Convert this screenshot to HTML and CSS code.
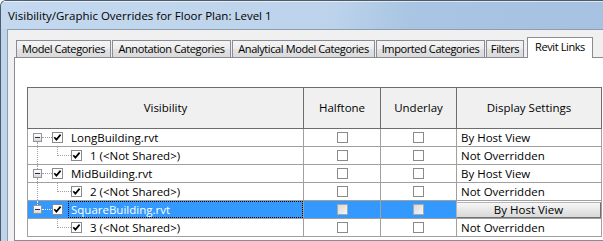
FILE: index.html
```html
<!DOCTYPE html>
<html>
<head>
<meta charset="utf-8">
<link rel="stylesheet" href="styles.css">
</head>
<body>
<div class="window">
  <div class="titlebar"><span class="title">Visibility/Graphic Overrides for Floor Plan: Level 1</span></div>
  <div class="main">
    <div class="client">
      <div class="tabs">
        <div class="tab t-model">Model Categories</div>
        <div class="tab t-anno">Annotation Categories</div>
        <div class="tab t-anal">Analytical Model Categories</div>
        <div class="tab t-imp">Imported Categories</div>
        <div class="tab t-filt">Filters</div>
        <div class="tab active t-links">Revit Links</div>
      </div>
      <div class="panel">
        <div class="grid">
          <div class="grid-head">
            <div class="hcell">Visibility</div>
            <div class="hcell">Halftone</div>
            <div class="hcell">Underlay</div>
            <div class="hcell">Display Settings</div>
          </div>
          <div class="grid-body">
            <div class="row">
              <div class="cell tree down"><span class="expander"><span class="minus"></span></span><span class="hline"></span><span class="check"><svg class="tick" viewBox="0 0 9 9"><polyline points="1.3,4.2 3.4,6.6 7.6,1.6"/></svg></span><span class="label">LongBuilding.rvt</span></div>
              <div class="cell center"><span class="check"></span></div>
              <div class="cell center"><span class="check"></span></div>
              <div class="cell disp">By Host View</div>
            </div>
            <div class="row">
              <div class="cell tree child trunk"><span class="elbow"></span><span class="check"><svg class="tick" viewBox="0 0 9 9"><polyline points="1.3,4.2 3.4,6.6 7.6,1.6"/></svg></span><span class="label">1 (&lt;Not Shared&gt;)</span></div>
              <div class="cell center"><span class="check"></span></div>
              <div class="cell center"><span class="check"></span></div>
              <div class="cell disp">Not Overridden</div>
            </div>
            <div class="row">
              <div class="cell tree up down"><span class="expander"><span class="minus"></span></span><span class="hline"></span><span class="check"><svg class="tick" viewBox="0 0 9 9"><polyline points="1.3,4.2 3.4,6.6 7.6,1.6"/></svg></span><span class="label">MidBuilding.rvt</span></div>
              <div class="cell center"><span class="check"></span></div>
              <div class="cell center"><span class="check"></span></div>
              <div class="cell disp">By Host View</div>
            </div>
            <div class="row">
              <div class="cell tree child trunk"><span class="elbow"></span><span class="check"><svg class="tick" viewBox="0 0 9 9"><polyline points="1.3,4.2 3.4,6.6 7.6,1.6"/></svg></span><span class="label">2 (&lt;Not Shared&gt;)</span></div>
              <div class="cell center"><span class="check"></span></div>
              <div class="cell center"><span class="check"></span></div>
              <div class="cell disp">Not Overridden</div>
            </div>
            <div class="row selected">
              <div class="cell tree up"><span class="expander"><span class="minus"></span></span><span class="hline"></span><span class="check"><svg class="tick" viewBox="0 0 9 9"><polyline points="1.3,4.2 3.4,6.6 7.6,1.6"/></svg></span><span class="label focus">SquareBuilding.rvt</span></div>
              <div class="cell center"><span class="check disabled"></span></div>
              <div class="cell center"><span class="check disabled"></span></div>
              <div class="cell btn-cell"><span class="btn">By Host View</span></div>
            </div>
            <div class="row">
              <div class="cell tree child"><span class="elbow"></span><span class="check"><svg class="tick" viewBox="0 0 9 9"><polyline points="1.3,4.2 3.4,6.6 7.6,1.6"/></svg></span><span class="label">3 (&lt;Not Shared&gt;)</span></div>
              <div class="cell center"><span class="check"></span></div>
              <div class="cell center"><span class="check"></span></div>
              <div class="cell disp">Not Overridden</div>
            </div>
          </div>
        </div>
      </div>
    </div>
  </div>
</div>
</body>
</html>
```

FILE: styles.css
```css
* { box-sizing: border-box; }

html, body {
  margin: 0;
  padding: 0;
}

body {
  width: 603px;
  height: 241px;
  overflow: hidden;
  background: #ffffff;
  font-family: "Open Sans", "Noto Sans", sans-serif;
  font-size: 11.5px;
  color: #000;
}

.window {
  width: 603px;
  height: 241px;
  display: flex;
  flex-direction: column;
  background: #bed4eb;
  border-top: 1px solid #4d5b6b;
  border-left: 1px solid #4d5b6b;
  border-top-left-radius: 6px;
  overflow: hidden;
}

.titlebar {
  height: 28px;
  flex: none;
  display: flex;
  align-items: center;
  padding-left: 7px;
  padding-top: 1px;
  background: linear-gradient(100deg, #c4d9ef 0%, #bcd3eb 55%, #a9c5e3 68%, #a6c2e0 100%);
  box-shadow: inset 0 1px 0 rgba(255,255,255,0.6);
}

.title {
  font-size: 11.5px;
  color: #000;
  white-space: nowrap;
}

.main {
  flex: 1;
  display: flex;
  padding-left: 6px;
  min-height: 0;
}

.client {
  flex: 1;
  display: flex;
  flex-direction: column;
  background: #f0f0f0;
  border-left: 1px solid #8d9db0;
  border-top: 1px solid #8d9db0;
  padding: 7px 0 0 6px;
  min-height: 0;
  min-width: 0;
}

/* Tabs */
.tabs {
  display: flex;
  align-items: flex-start;
  height: 21px;
  margin-left: 2px;
  margin-bottom: -1px;
  position: relative;
  z-index: 1;
  flex: none;
}

.tab {
  height: 17px;
  margin-top: 3px;
  margin-left: 1px;
  border: 1px solid #898c95;
  border-bottom: none;
  background: linear-gradient(#f4f4f4 0%, #ececec 50%, #e2e2e2 51%, #dadada 100%);
  font-size: 11px;
  letter-spacing: -0.4px;
  line-height: 15px;
  text-align: center;
  white-space: nowrap;
  color: #000;
  flex: none;
}

.tab.active {
  height: 21px;
  margin-top: 0;
  background: #ffffff;
  line-height: 18px;
}

.t-model { width: 95px; margin-left: 0; }
.t-anno { width: 119px; }
.t-anal { width: 143px; }
.t-imp { width: 109px; }
.t-filt { width: 38px; }
.t-links { width: 66px; margin-left: 3px; }

/* Panel */
.panel {
  flex: 1;
  background: #ffffff;
  border: 1px solid #898c95;
  border-right: none;
  padding: 29px 0 0 12px;
}

.grid {
  width: 575px;
}

.grid-head {
  display: grid;
  grid-template-columns: 275px 76px 75px 144px;
  gap: 1px;
  background: #6d6d6d;
  border: 1px solid #6d6d6d;
}

.hcell {
  height: 40px;
  background: #f0f0f0;
  display: flex;
  align-items: center;
  justify-content: center;
  padding-bottom: 1px;
}

.grid-body {
  display: grid;
  grid-template-columns: 275px 76px 75px 144px;
  grid-auto-rows: 17px;
  gap: 1px;
  background: #a0a0a0;
  border: 1px solid #a0a0a0;
  border-top: none;
}

.row { display: contents; }

.cell {
  background: #ffffff;
  display: flex;
  align-items: center;
  white-space: nowrap;
}

.center { justify-content: center; }

.disp { padding-left: 4px; }

/* Tree */
.tree {
  position: relative;
  padding-left: 5px;
}

.tree.child { padding-left: 29px; }

.tree.up::before {
  content: "";
  position: absolute;
  left: 9px;
  top: 0;
  height: 4px;
  border-left: 1px dotted #a0a0a0;
}

.tree.down::after {
  content: "";
  position: absolute;
  left: 9px;
  top: 13px;
  bottom: 0;
  border-left: 1px dotted #a0a0a0;
}

.tree.trunk::before {
  content: "";
  position: absolute;
  left: 9px;
  top: 0;
  bottom: 0;
  border-left: 1px dotted #a0a0a0;
}

.expander {
  width: 9px;
  height: 9px;
  flex: none;
  border: 1px solid #949494;
  background: linear-gradient(#ffffff, #d8d8d8);
  display: flex;
  align-items: center;
  justify-content: center;
}

.minus {
  width: 5px;
  height: 1px;
  background: #1f2f52;
}

.hline {
  width: 10px;
  height: 1px;
  flex: none;
  border-top: 1px dotted #a0a0a0;
}

.elbow {
  width: 14px;
  height: 9px;
  flex: none;
  align-self: flex-start;
  border-left: 1px dotted #a0a0a0;
  border-bottom: 1px dotted #a0a0a0;
}

.check {
  width: 11px;
  height: 11px;
  flex: none;
  border: 1px solid #8a8a8a;
  background: #ffffff;
  display: flex;
  align-items: center;
  justify-content: center;
}

.check.disabled {
  border-color: #a8a8a8;
  background: linear-gradient(135deg, #d8d8d8, #f6f6f6);
}

.tick {
  width: 9px;
  height: 9px;
  fill: none;
  stroke: #000;
  stroke-width: 1.7;
}

.label {
  flex: 1;
  align-self: stretch;
  display: flex;
  align-items: center;
  margin-left: 5px;
  padding-left: 3px;
}

/* Selected row */
.row.selected .cell { background: #3399ff; }
.row.selected .label { color: #ffffff; }
.row.selected .focus { outline: 1px dotted #000; outline-offset: -1px; }
.row.selected .hline { border-top-color: #e8f2ff; }
.row.selected .tree.up::before { border-left-color: #e8f2ff; }
.row.selected .cell.btn-cell { background: #ffffff; }

.btn {
  flex: 1;
  align-self: stretch;
  margin: 1px 0 0 -1px;
  border: 1px solid;
  border-color: #b5b5b5 #707070 #707070 #b5b5b5;
  background: linear-gradient(#f7f7f7, #e4e4e4 60%, #d9d9d9);
  display: flex;
  align-items: center;
  justify-content: center;
  line-height: 1;
}
```
